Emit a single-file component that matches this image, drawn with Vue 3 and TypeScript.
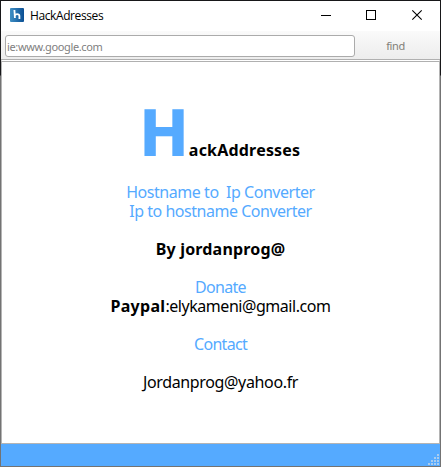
<script setup lang="ts">
import { ref } from 'vue'

interface Segment {
  text: string
  bold?: boolean
  spacing: string
}

interface Line {
  segments: Segment[]
  tone: 'accent' | 'plain'
  gapBefore?: boolean
}

const address = ref('')

const lines: Line[] = [
  { segments: [{ text: 'Hostname to\u00a0 Ip Converter', spacing: '-0.46px' }], tone: 'accent' },
  { segments: [{ text: 'Ip to hostname Converter', spacing: '-0.48px' }], tone: 'accent' },
  { segments: [{ text: 'By jordanprog@', bold: true, spacing: '0.18px' }], tone: 'plain', gapBefore: true },
  { segments: [{ text: 'Donate', spacing: '-0.7px' }], tone: 'accent', gapBefore: true },
  {
    segments: [
      { text: 'Paypal', bold: true, spacing: '0.3px' },
      { text: ':elykameni@gmail.com', spacing: '-0.45px' },
    ],
    tone: 'plain',
  },
  { segments: [{ text: 'Contact', spacing: '-0.7px' }], tone: 'accent', gapBefore: true },
  { segments: [{ text: 'Jordanprog@yahoo.fr', spacing: '-0.35px' }], tone: 'plain', gapBefore: true },
]
</script>

<template>
  <div class="window">
    <header class="titlebar">
      <svg class="logo" width="14" height="14" viewBox="0 0 14 14">
        <defs>
          <linearGradient id="logo-fill" x1="0" y1="0" x2="1" y2="0">
            <stop offset="0" stop-color="#3f8fc4" />
            <stop offset="1" stop-color="#0b4f94" />
          </linearGradient>
        </defs>
        <rect width="14" height="14" rx="1" fill="url(#logo-fill)" />
        <path d="M4.4 2L4.9 10M5 7.4Q5.5 6.2 7 6.2Q9.4 6.2 9.4 8V11" fill="none" stroke="#fff" stroke-width="1.8" />
      </svg>
      <span class="title">HackAdresses</span>
      <svg class="controls" width="138" height="30" viewBox="0 0 138 30" fill="none" stroke="#000">
        <path d="M19 14.5h10" />
        <rect x="64.5" y="9.5" width="9" height="9" />
        <path d="M110.3 9.3l9.4 9.4M119.7 9.3l-9.4 9.4" stroke-width="1.1" />
      </svg>
    </header>
    <div class="toolbar">
      <input v-model="address" class="address" type="text" placeholder="ie:www.google.com" />
      <button class="find" type="button">find</button>
    </div>
    <main class="content">
      <h1 class="heading"><span class="initial">H</span><span class="rest">ackAddresses</span></h1>
      <p
        v-for="(line, i) in lines"
        :key="i"
        class="line"
        :class="[line.tone, { spaced: line.gapBefore }]"
      ><span v-for="(segment, j) in line.segments" :key="j" :class="{ bold: segment.bold }" :style="{ letterSpacing: segment.spacing }">{{ segment.text }}</span></p>
    </main>
    <footer class="statusbar">
      <svg class="grip" width="12" height="12" viewBox="0 0 12 12">
        <g fill="#a9ccef">
          <path d="M9 0h2v2h-2zM6 3h2v2h-2zM9 3h2v2h-2zM3 6h2v2h-2zM6 6h2v2h-2zM9 6h2v2h-2zM0 9h2v2h-2zM3 9h2v2h-2zM6 9h2v2h-2zM9 9h2v2h-2z" />
        </g>
      </svg>
    </footer>
  </div>
</template>

<style>
body {
  margin: 0;
  overflow: hidden;
}
</style>

<style scoped>
.window {
  box-sizing: border-box;
  width: 441px;
  height: 467px;
  display: flex;
  flex-direction: column;
  padding: 1px;
  background: linear-gradient(#171719 0 75px, #737373 76px);
  font-family: "Noto Sans", "DejaVu Sans", sans-serif;
}
.titlebar {
  display: flex;
  align-items: center;
  height: 30px;
  background: #fff;
  padding-left: 9px;
}
.logo {
  flex: none;
  position: relative;
  top: -1px;
}
.title {
  flex: 1;
  margin-left: 6px;
  font: 12px/16px "Open Sans", "Noto Sans", sans-serif;
  letter-spacing: -0.4px;
  color: #000;
}
.controls {
  flex: none;
}
.toolbar {
  box-sizing: border-box;
  display: flex;
  height: 28px;
  padding: 4px 0 2px 4px;
  background: linear-gradient(#fafafa, #ededed);
}
.address {
  box-sizing: border-box;
  width: 350px;
  height: 22px;
  margin: 0;
  padding: 1px 1px 0;
  border: 1px solid #ababab;
  border-radius: 3px;
  background: #fff;
  font: inherit;
  font-size: 11px;
  letter-spacing: -0.35px;
  outline: none;
}
.address::placeholder {
  color: #808080;
  opacity: 1;
}
.find {
  flex: 1;
  padding: 0 4px 2px 0;
  border: 0;
  background: none;
  font: inherit;
  font-size: 11px;
  letter-spacing: -0.4px;
  color: #827f78;
}
.content {
  box-sizing: border-box;
  height: 385px;
  border: 1px solid #b4b4b4;
  border-top: 3px double #b0b0b0;
  background: #fff;
  text-align: center;
  font-size: 16px;
  line-height: 19px;
  white-space: pre;
}
.heading {
  margin: 33px 0 0;
  height: 88px;
  font-size: 16px;
  line-height: 78px;
  font-weight: 700;
}
.initial {
  display: inline-block;
  font-size: 64px;
  font-family: "DejaVu Sans Condensed", "DejaVu Sans", sans-serif;
  font-stretch: condensed;
  color: #55aaff;
  transform: scaleX(1.04);
  transform-origin: right;
}
.rest {
  letter-spacing: 0.2px;
}
.line {
  margin: 0;
}
.spaced {
  margin-top: 19px;
}
.accent {
  color: #55aaff;
}
.plain {
  color: #000;
}
.bold {
  font-weight: 700;
}
.statusbar {
  display: flex;
  flex: 1;
  align-items: flex-end;
  justify-content: flex-end;
  background: #55aaff;
}
.grip {
  display: block;
}
</style>
